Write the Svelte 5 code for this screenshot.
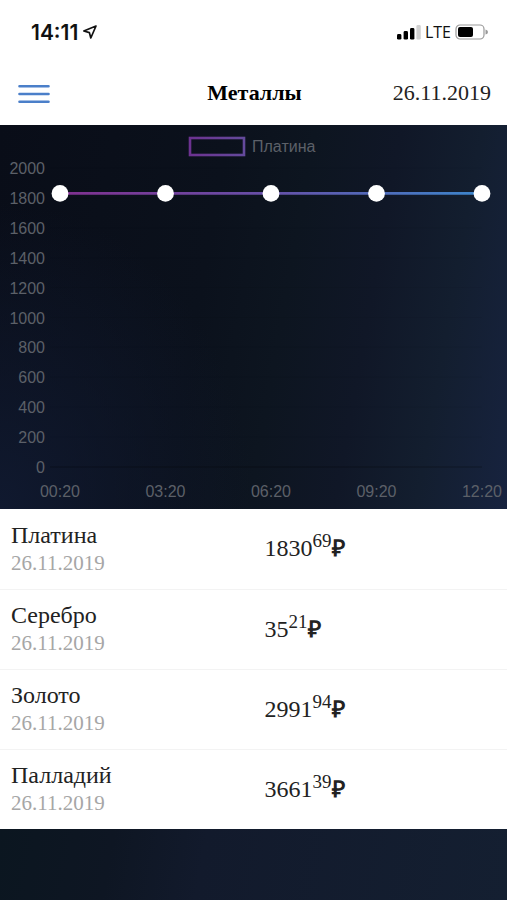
<script>
    const date = '26.11.2019';

    const metals = [
        { name: 'Платина', whole: 1830, cents: 69 },
        { name: 'Серебро', whole: 35, cents: 21 },
        { name: 'Золото', whole: 2991, cents: 94 },
        { name: 'Палладий', whole: 3661, cents: 39 },
    ];

    const points = [
        { time: '00:20', value: 1830 },
        { time: '03:20', value: 1830 },
        { time: '06:20', value: 1830 },
        { time: '09:20', value: 1830 },
        { time: '12:20', value: 1830 },
    ];

    const ticks = [2000, 1800, 1600, 1400, 1200, 1000, 800, 600, 400, 200, 0];

    // plot area inside the chart viewBox
    const left = 60;
    const right = 482;
    const top = 43;
    const bottom = 342;

    const x = (i) => left + ((right - left) * i) / (points.length - 1);
    const y = (value) => bottom - ((bottom - top) * value) / 2000;
    const line = points.map((p, i) => `${x(i)},${y(p.value)}`).join(' ');
</script>

<div class="app">
    <div class="status">
        <div class="time">
            <span>14:11</span>
            <svg width="16" height="16" viewBox="0 0 16 16" aria-hidden="true">
                <path d="M14 2 L1.8 7 L7.4 8.6 L8.8 14 Z" fill="none" stroke="#111" stroke-width="1.7" stroke-linejoin="round" />
            </svg>
        </div>
        <div class="signal">
            <svg width="24" height="16" viewBox="0 0 24 16" aria-hidden="true">
                <rect x="0" y="10" width="4.4" height="5.6" rx="1.4" fill="#000" />
                <rect x="6.6" y="7" width="4.4" height="8.6" rx="1.4" fill="#000" />
                <rect x="13" y="4" width="4.4" height="11.6" rx="1.4" fill="#000" />
                <rect x="19.4" y="1" width="4.4" height="14.6" rx="1.4" fill="#d2d2d2" />
            </svg>
            <span>LTE</span>
            <svg width="34" height="16" viewBox="0 0 34 16" aria-hidden="true">
                <rect x="1" y="1" width="28" height="14" rx="4" fill="none" stroke="#999" stroke-width="1.2" />
                <rect x="3" y="3" width="15" height="10" rx="2" fill="#000" />
                <path d="M30.5 5.5 Q33 6 33 8 Q33 10 30.5 10.5 Z" fill="#999" />
            </svg>
        </div>
    </div>

    <header>
        <button class="menu" aria-label="Меню">
            <svg width="32" height="20" viewBox="0 0 32 20" aria-hidden="true">
                <path d="M1.5 2.2 H30.5 M1.5 10 H30.5 M1.5 17.8 H30.5" stroke="#4b7fc9" stroke-width="2.6" stroke-linecap="round" />
            </svg>
        </button>
        <h1>Металлы</h1>
        <span class="date">{date}</span>
    </header>

    <div class="chart">
        <svg viewBox="0 0 507 384" role="img" aria-label="Платина">
            <defs>
                <linearGradient id="stroke" gradientUnits="userSpaceOnUse" x1="60" y1="0" x2="482" y2="0">
                    <stop offset="0" stop-color="#80308f" />
                    <stop offset="0.5" stop-color="#6650a8" />
                    <stop offset="1" stop-color="#3c86cc" />
                </linearGradient>
                <linearGradient id="legend" x1="0" y1="0" x2="1" y2="0">
                    <stop offset="0" stop-color="#6c3290" />
                    <stop offset="1" stop-color="#644a9c" />
                </linearGradient>
            </defs>
            <rect x="190" y="13" width="54" height="17" fill="none" stroke="url(#legend)" stroke-width="2.6" />
            <text x="252" y="27">Платина</text>
            {#each ticks as tick}
                <line x1="50" x2={right} y1={y(tick)} y2={y(tick)} class="grid" class:zero={tick === 0} />
                <text x="45" y={y(tick) + 6} text-anchor="end">{tick}</text>
            {/each}
            {#each points as point, i}
                <text x={x(i)} y="372" text-anchor="middle">{point.time}</text>
            {/each}
            <polyline points={line} fill="none" stroke="url(#stroke)" stroke-width="2.6" />
            {#each points as point, i}
                <circle cx={x(i)} cy={y(point.value)} r="8.4" fill="#fff" />
            {/each}
        </svg>
    </div>

    <table>
        <tbody>
            {#each metals as metal}
                <tr>
                    <th scope="row">
                        <span class="name">{metal.name}</span>
                        <span class="day">{date}</span>
                    </th>
                    <td>{metal.whole}<sup>{metal.cents}</sup><b>₽</b></td>
                </tr>
            {/each}
        </tbody>
    </table>

    <div class="footer"></div>
</div>

<style>
    :global(body) {
        margin: 0;
        background: #fff;
    }
    .app {
        display: flex;
        flex-direction: column;
        min-height: 100vh;
        font-family: 'Liberation Serif', serif;
        color: #222;
    }
    .status {
        display: flex;
        justify-content: space-between;
        align-items: center;
        height: 64px;
        padding: 0 18px 0 31px;
        box-sizing: border-box;
        font-family: Inter, sans-serif;
        color: #111;
    }
    .time,
    .signal {
        display: flex;
        align-items: center;
        gap: 4px;
    }
    .time {
        font-size: 21px;
        font-weight: 600;
    }
    .signal {
        font-family: 'Open Sans', sans-serif;
        font-size: 16px;
    }
    header {
        display: grid;
        grid-template-columns: 1fr auto 1fr;
        align-items: center;
        height: 61px;
        padding: 0 16px 4px 18px;
        box-sizing: border-box;
    }
    .menu {
        justify-self: start;
        display: flex;
        padding: 2px 0 0;
        border: 0;
        background: none;
    }
    h1 {
        margin: 0;
        font-size: 22px;
        color: #000;
    }
    .date {
        justify-self: end;
        font-size: 22px;
    }
    .chart {
        background:
            radial-gradient(ellipse 50% 80% at 0% 100%, #10192f, transparent),
            linear-gradient(100deg, #090d18 0%, #0b111c 40%, #0d1520 55%, #101727 70%, #131e2f 84%, #17233f 100%);
    }
    .chart svg {
        display: block;
        width: 100%;
    }
    .chart text {
        font-family: 'Liberation Sans', sans-serif;
        font-size: 16px;
        fill: #5c6068;
    }
    .grid {
        stroke: rgba(0, 0, 0, 0.04);
    }
    .zero {
        stroke: rgba(0, 0, 0, 0.3);
    }
    table {
        width: 100%;
        border-collapse: collapse;
        table-layout: fixed;
    }
    tr {
        height: 80px;
        border-bottom: 1px solid #f3f3f3;
    }
    tr:last-child {
        border-bottom: 0;
    }
    th,
    td {
        width: 50%;
        padding: 0 11px;
        text-align: left;
        font-weight: normal;
        font-size: 24px;
    }
    .name,
    .day {
        display: block;
        line-height: 28px;
    }
    .day {
        font-size: 21px;
        color: #a6a6a6;
    }
    sup {
        font-size: 19px;
        line-height: 0;
    }
    b {
        font-family: 'Open Sans', sans-serif;
        font-size: 23px;
        line-height: 24px;
    }
    .footer {
        flex: 1;
        background: linear-gradient(100deg, #0b1620 0%, #0e1623 22%, #121a2c 40%, #141f31 100%);
    }
</style>
